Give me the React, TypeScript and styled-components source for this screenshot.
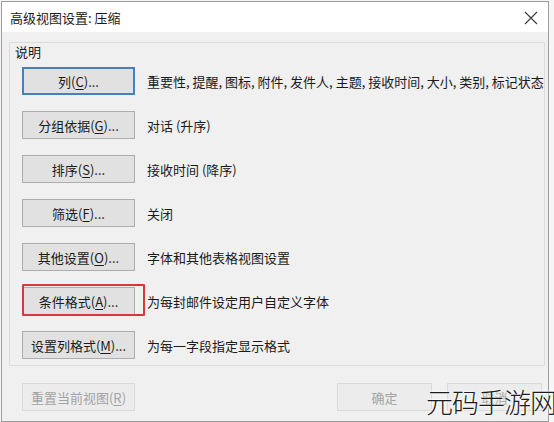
import React from 'react'
import styled, {createGlobalStyle} from 'styled-components'

const GlobalStyle = createGlobalStyle`
  html, body {
    margin: 0;
    padding: 0;
    background: #f6f6f6;
  }
  body {
    font-family: "Noto Sans CJK SC", "Noto Sans", sans-serif;
    font-size: 13px;
    color: #111;
  }
`

const rows = [
    {label: '列', key: 'C', text: '重要性, 提醒, 图标, 附件, 发件人, 主题, 接收时间, 大小, 类别, 标记状态', focused: true},
    {label: '分组依据', key: 'G', text: '对话 (升序)'},
    {label: '排序', key: 'S', text: '接收时间 (降序)'},
    {label: '筛选', key: 'F', text: '关闭'},
    {label: '其他设置', key: 'O', text: '字体和其他表格视图设置'},
    {label: '条件格式', key: 'A', text: '为每封邮件设定用户自定义字体', marked: true},
    {label: '设置列格式', key: 'M', text: '为每一字段指定显示格式'},
]

const App = () => {
  return (
    <Screen>
      <GlobalStyle />
      <Frame>
        <TitleBar>
          <Title>高级视图设置: 压缩</Title>
          <Close>
            <svg width="14" height="14" viewBox="0 0 14 14">
              <path d="M1 1L13 13M13 1L1 13" stroke="#3a3a3a" strokeWidth="1.1" fill="none" />
            </svg>
          </Close>
        </TitleBar>

        <Body>
          <Group>
            <Legend>说明</Legend>
            <Rows>
              {rows.map((r) => (
                <Row key={r.key}>
                  <ButtonSlot>
                    <Button $focused={r.focused}>
                      {r.label}(<u>{r.key}</u>)...
                    </Button>
                    {r.marked ? <RedMark /> : null}
                  </ButtonSlot>
                  <Desc>{r.text}</Desc>
                </Row>
              ))}
            </Rows>
          </Group>

          <Footer>
            <Button $disabled>重置当前视图(<u>R</u>)</Button>
            <FooterRight>
              <Button $disabled $w={95}>确定</Button>
              <Button $disabled $w={95}>取消</Button>
            </FooterRight>
          </Footer>
        </Body>
      </Frame>
      <Watermark>元码手游网</Watermark>
    </Screen>
  )
}

export default App

const Screen = styled.div`
    position: relative;
    width: 554px;
    height: 422px;
    overflow: hidden;
`
const Frame = styled.div`
    margin-left: 1px;
    margin-top: 1px;
    width: 546px;
    height: 419px;
    border: 1px solid #9c9c9c;
    background: #f0f0f0;
    display: flex;
    flex-direction: column;
`
const TitleBar = styled.div`
    height: 30px;
    background: #fff;
    display: flex;
    align-items: center;
    justify-content: space-between;
    padding: 0 10px 0 8px;
`
const Title = styled.div`
    font-size: 13px;
    color: #1a1a1a;
`
const Close = styled.div`
    display: flex;
    align-items: center;
    margin-top: 1px;
`
const Body = styled.div`
    flex: 1;
    padding: 10px 3px 0 7px;
    display: flex;
    flex-direction: column;
`
const Group = styled.div`
    border: 1px solid #dddddd;
    padding: 0 12px 6px 12px;
`
const Legend = styled.div`
    margin-left: -7px;
    line-height: 16px;
    margin-top: 1px;
    color: #1a1a1a;
`
const Rows = styled.div`
    margin-top: 7px;
    display: flex;
    flex-direction: column;
    gap: 16px;
`
const Row = styled.div`
    display: flex;
    align-items: center;
    gap: 12px;
`
const ButtonSlot = styled.div`
    position: relative;
    display: flex;
`
const Button = styled.div<{$focused?: boolean; $disabled?: boolean; $w?: number}>`
    box-sizing: border-box;
    width: ${(p) => p.$w || 113}px;
    height: 28px;
    display: flex;
    align-items: center;
    justify-content: center;
    background: ${(p) => (p.$disabled ? '#ececec' : '#e1e1e1')};
    border: ${(p) => (p.$focused ? '2px solid #4a80b8' : p.$disabled ? '1px solid #dadada' : '1px solid #adadad')};
    color: ${(p) => (p.$disabled ? '#a3a3a3' : '#1a1a1a')};
    font-size: 13px;
    white-space: nowrap;
    u {
        text-underline-offset: 2px;
    }
`
const RedMark = styled.div`
    position: absolute;
    left: 0;
    top: -3px;
    right: -10px;
    bottom: -1px;
    border: 2px solid #d8383c;
    border-radius: 1px;
`
const Desc = styled.div`
    color: #1a1a1a;
    white-space: nowrap;
`
const Footer = styled.div`
    margin-top: 17px;
    padding: 0 3px 0 13px;
    display: flex;
    justify-content: space-between;
`
const FooterRight = styled.div`
    display: flex;
    gap: 15px;
`
const Watermark = styled.div`
    position: absolute;
    right: -2px;
    bottom: 5px;
    font-size: 27px;
    line-height: 30px;
    font-weight: 300;
    color: #1c1c1c;
    letter-spacing: -1px;
    text-shadow: 0 0 3px #fff, 0 0 3px #fff;
`
